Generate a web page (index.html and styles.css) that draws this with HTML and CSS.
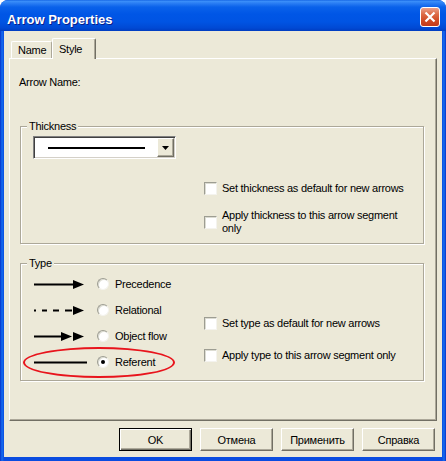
FILE: index.html
```html
<!DOCTYPE html>
<html lang="en">
<head>
    <meta charset="UTF-8">
    <title>Arrow Properties</title>
    <link rel="stylesheet" href="styles.css">
</head>
<body>
    <div class="window">
        <div class="titlebar">
            <span class="title">Arrow Properties</span>
            <span class="close">
                <svg width="12" height="12" viewBox="0 0 12 12"><path d="M1.5 1.5 L10.5 10.5 M10.5 1.5 L1.5 10.5" stroke="#fff" stroke-width="2.2"/></svg>
            </span>
        </div>
        <div class="client">
            <div class="tabs">
                <div class="tab">Name</div>
                <div class="tab active">Style</div>
            </div>
            <div class="panel">
                <div class="name-row">Arrow Name:</div>

                <fieldset class="group thickness">
                    <legend>Thickness</legend>
                    <div class="combo">
                        <span class="combo-line"></span>
                        <span class="combo-btn">
                            <svg width="7" height="4" viewBox="0 0 7 4"><path d="M0 0 H7 L3.5 4 Z" fill="#000"/></svg>
                        </span>
                    </div>
                    <div class="checks thick-checks">
                        <div class="check"><span class="box"></span><span class="text">Set thickness as default for new arrows</span></div>
                        <div class="check"><span class="box"></span><span class="text">Apply thickness to this arrow segment only</span></div>
                    </div>
                </fieldset>

                <fieldset class="group type">
                    <legend>Type</legend>
                    <div class="type-body">
                        <div class="types">
                            <div class="type-row">
                                <svg width="64" height="13" viewBox="0 0 64 13"><rect x="1" y="5.5" width="41" height="2" fill="#000"/><polygon points="40,2 51,6.5 40,11" fill="#000"/></svg>
                                <span class="radio"></span>
                                <span class="text">Precedence</span>
                            </div>
                            <div class="type-row">
                                <svg width="64" height="13" viewBox="0 0 64 13"><rect x="1" y="5.5" width="2" height="2" fill="#000"/><rect x="9" y="5.5" width="5" height="2" fill="#000"/><rect x="20" y="5.5" width="6" height="2" fill="#000"/><rect x="32" y="5.5" width="7" height="2" fill="#000"/><polygon points="40,2 51,6.5 40,11" fill="#000"/></svg>
                                <span class="radio"></span>
                                <span class="text">Relational</span>
                            </div>
                            <div class="type-row">
                                <svg width="64" height="13" viewBox="0 0 64 13"><rect x="1" y="5.5" width="30" height="2" fill="#000"/><polygon points="28,2 39,6.5 28,11" fill="#000"/><polygon points="40,2 51,6.5 40,11" fill="#000"/></svg>
                                <span class="radio"></span>
                                <span class="text">Object flow</span>
                            </div>
                            <div class="type-row referent">
                                <svg width="64" height="13" viewBox="0 0 64 13"><rect x="1" y="5.5" width="53" height="2" fill="#000"/></svg>
                                <span class="radio checked"></span>
                                <span class="text">Referent</span>
                                <span class="mark"></span>
                            </div>
                        </div>
                        <div class="checks type-checks">
                            <div class="check"><span class="box"></span><span class="text">Set type as default for new arrows</span></div>
                            <div class="check"><span class="box"></span><span class="text">Apply type to this arrow segment only</span></div>
                        </div>
                    </div>
                </fieldset>
            </div>
            <div class="buttons">
                <button class="default">OK</button>
                <button>Отмена</button>
                <button>Применить</button>
                <button>Справка</button>
            </div>
        </div>
    </div>
</body>
</html>
```

FILE: styles.css
```css
* {margin: 0; padding: 0; box-sizing: border-box;}
body {background-color: #ffffff; font: 11px/13px "Liberation Sans", Arial, sans-serif; letter-spacing: -0.25px; color: #000000;}

.window {width: 446px; height: 461px; display: flex; flex-direction: column; background: linear-gradient(to right, #0831C8 0, #166EF0 2px, #0A4CE0 4px, #0A4CE0 442px, #166EF0 444px, #0831C8 446px); border-radius: 8px 8px 0 0; overflow: hidden;}

.titlebar {height: 31px; flex: none; display: flex; align-items: flex-start; padding: 0 6px 0 7px; background: linear-gradient(to bottom, #0A5ADE 0, #3D91FA 1px, #2C80F4 3px, #0A62EA 7px, #0056E6 14px, #0054E3 22px, #0049D4 28px, #003CC0 31px);}
.titlebar .title {margin-top: 12px; font: bold 13px/15px "Liberation Sans", Arial, sans-serif; letter-spacing: 0; color: #ffffff; text-shadow: 1px 1px 0 #0A1E8A;}
.titlebar .close {margin: 7px 0 0 auto; width: 20px; height: 20px; border: 1px solid #ffffff; border-radius: 3px; background: linear-gradient(to bottom, #E9A08A 0, #DD6A45 35%, #CF4A24 70%, #C2391B 100%); display: flex; align-items: center; justify-content: center;}

.client {flex: 1; margin: 0 4px 4px; background-color: #ECE9D8; padding: 7px 5px 6px; display: flex; flex-direction: column;}

.tabs {height: 20px; flex: none; display: flex; align-items: flex-end; padding-left: 2px;}
.tab {height: 17px; width: 41px; line-height: 16px; padding-left: 6px; border-top: 1px solid #ffffff; border-left: 1px solid #ffffff; border-right: 1px solid #ACA899; border-radius: 2px 2px 0 0; background-color: #ECE9D8;}
.tab.active {height: 21px; width: 44px; line-height: 20px; margin-bottom: -1px; position: relative; z-index: 1; border-right: 1px solid #716F64; box-shadow: inset -1px 0 0 #ACA899;}

.panel {flex: 1; border: 1px solid; border-color: #ffffff #716F64 #716F64 #ffffff; box-shadow: inset -1px -1px 0 #ACA899; padding: 17px 12px 0 10px;}
.panel .name-row {margin-left: -1px;}

.group {margin: 0; min-width: 0; border: 1px solid #ACA899; box-shadow: inset 1px 1px 0 #ffffff, 1px 1px 0 #ffffff; padding: 3px 12px 8px;}
.group legend {margin-left: -6px; padding: 0 2px; background-color: #ECE9D8; line-height: 13px;}
.thickness {margin-top: 31px;}
.type {margin-top: 13px; padding: 1px 12px 5px;}

.combo {width: 143px; height: 23px; background-color: #ffffff; border: 1px solid; border-color: #808080 #ffffff #ffffff #808080; box-shadow: inset 1px 1px 0 #404040, inset -1px -1px 0 #D4D0C8; padding: 1px; display: flex; align-items: center;}
.combo-line {width: 97px; height: 2px; margin-left: 13px; background-color: #000000;}
.combo-btn {margin-left: auto; width: 17px; height: 19px; background-color: #ECE9D8; border: 1px solid; border-color: #ffffff #716F64 #716F64 #ffffff; box-shadow: inset -1px -1px 0 #ACA899; display: flex; align-items: center; justify-content: center;}

.checks {display: flex; flex-direction: column;}
.thick-checks {margin: 23px 0 0 171px; gap: 14px;}
.check {display: flex; align-items: center; gap: 5px;}
.check .box {flex: none; width: 13px; height: 13px; background-color: #ffffff; border: 1px solid; border-color: #9D9D92 #F4F3EE #F4F3EE #9D9D92; box-shadow: inset 1px 1px 0 #DCDCD2;}
.check .text {max-width: 189px;}

.type-body {display: flex;}
.types {width: 171px; flex: none;}
.type-row {height: 26px; display: flex; align-items: center;}
.type-row svg {flex: none;}
.radio {flex: none; width: 12px; height: 12px; border-radius: 50%; background-color: #ffffff; border: 1px solid; border-color: #9D9D92 #F4F3EE #F4F3EE #9D9D92; box-shadow: inset 1px 1px 0 #DCDCD2; margin-right: 6px; display: flex; align-items: center; justify-content: center;}
.radio.checked::after {content: ""; width: 4px; height: 4px; border-radius: 50%; background-color: #000000;}
.referent {position: relative;}
.referent .mark {position: absolute; left: -10px; top: -2px; width: 152px; height: 31px; border: 2px solid #E8141C; border-radius: 50%; pointer-events: none;}
.type-checks {padding-top: 46px; gap: 19px;}

.buttons {flex: none; display: flex; justify-content: flex-end; gap: 8px; margin-top: 7px; padding-right: 2px;}
.buttons button {width: 73px; height: 23px; font: 11px "Liberation Sans", Arial, sans-serif; letter-spacing: -0.25px; color: #000000; background-color: #ECE9D8; border: 1px solid; border-color: #ffffff #716F64 #716F64 #ffffff; box-shadow: inset -1px -1px 0 #ACA899;}
.buttons button.default {border: 1px solid #000000; box-shadow: inset 1px 1px 0 #ffffff, inset -1px -1px 0 #716F64, inset -2px -2px 0 #ACA899;}
```
